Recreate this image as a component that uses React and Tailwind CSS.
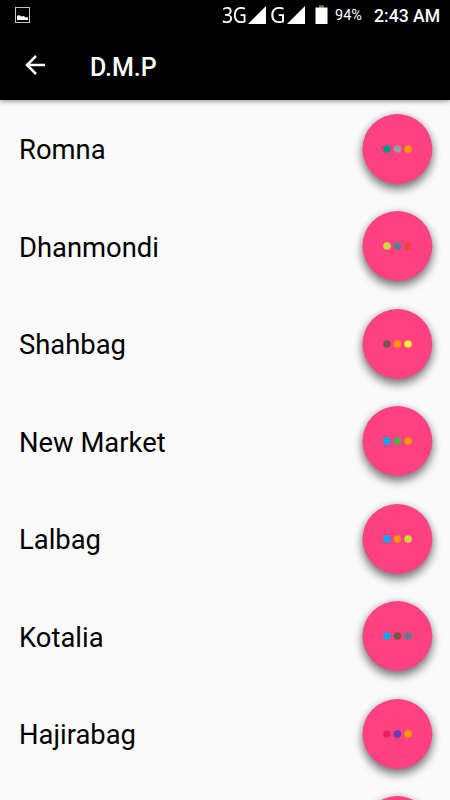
import React from 'react';

const areas = [
    { name: 'Romna', dots: ['#009688', '#9e9e9e', '#ff9800'] },
    { name: 'Dhanmondi', dots: ['#cddc39', '#607d8b', '#f44336'] },
    { name: 'Shahbag', dots: ['#795548', '#ff9800', '#ffeb3b'] },
    { name: 'New Market', dots: ['#03a9f4', '#4caf50', '#ff9800'] },
    { name: 'Lalbag', dots: ['#03a9f4', '#ff9800', '#cddc39'] },
    { name: 'Kotalia', dots: ['#03a9f4', '#795548', '#607d8b'] },
    { name: 'Hajirabag', dots: ['#e91e63', '#673ab7', '#ff9800'] },
    { name: '', dots: ['#03a9f4', '#4caf50', '#ff9800'] },
];

function Signal() {
    return (
        <svg width="18" height="18" viewBox="0 0 18 18" className="block">
            <path d="M0 18L18 0V18Z" fill="#fff" />
        </svg>
    );
}

function StatusBar() {
    return (
        <div className="flex h-[31px] items-start text-white">
            <svg width="15" height="16" viewBox="0 0 15 16" className="mt-[7px] ml-[15px]">
                <rect x="0.5" y="0.5" width="14" height="15" fill="none" stroke="#c4c4c4" />
                <path d="M2 13V9L4 8L6 9.5L9 9L10.5 10.5L12 10L13 11V13Z" fill="#fff" />
            </svg>
            <div className="ml-auto flex items-start">
                <span className="w-[25px] origin-left scale-x-[0.86] text-[22.5px] leading-[30px] tracking-[-0.5px] font-['Noto_Sans']">3G</span>
                <div className="mt-[6px] ml-px"><Signal /></div>
                <span className="ml-[4px] w-[17px] origin-left scale-x-95 text-[22.5px] leading-[30px] font-['Noto_Sans']">G</span>
                <div className="mt-[6px]"><Signal /></div>
                <svg width="13" height="19" viewBox="0 0 13 19" className="mt-[5px] ml-[10px]">
                    <rect x="4" y="0" width="5" height="3" fill="#5c5c5c" />
                    <rect x="0.5" y="2.5" width="12" height="16.5" fill="#fff" />
                </svg>
                <span className="ml-[7px] w-[28px] text-[14.5px] leading-[32px]">94%</span>
                <span className="mr-[10px] ml-[11px] w-[66px] text-[17.6px] leading-[33px] font-medium whitespace-nowrap">2:43 AM</span>
            </div>
        </div>
    );
}

function MoreButton({ dots }) {
    return (
        <button type="button" aria-label="More" className="mr-[18px] h-[70px] w-[70px] shrink-0 rounded-full">
            <svg
                width="70"
                height="70"
                viewBox="0 0 70 70"
                className="block overflow-visible [filter:drop-shadow(0_5px_5px_rgba(0,0,0,0.48))_drop-shadow(0_0_3px_rgba(0,0,0,0.16))]"
            >
                <circle cx="35.4" cy="35" r="34.9" fill="#ff4081" />
                {dots.map((color, i) => (
                    <circle key={i} cx={24.9 + i * 10.6} cy="35" r="3.8" fill={color} />
                ))}
            </svg>
        </button>
    );
}

export default function App() {
    return (
        <div className="flex h-screen w-full flex-col overflow-hidden bg-[#fafafa] font-[Roboto,sans-serif]">
            <header className="z-10 h-[100px] shrink-0 bg-black text-white shadow-[0_1px_5px_rgba(0,0,0,0.45)]">
                <StatusBar />
                <div className="flex h-[69px] items-center">
                    <svg width="20" height="20" viewBox="0 0 20 20" className="-mt-px ml-[25px]">
                        <path d="M20 10H2M11 1L2 10L11 19" fill="none" stroke="#fff" strokeWidth="2.5" />
                    </svg>
                    <h1 className="mt-[4px] ml-[45px] text-[25px] leading-[30px] font-medium">D.M.P</h1>
                </div>
            </header>

            <main className="min-h-0 flex-1 overflow-hidden">
                {areas.map((area, i) => (
                    <div key={i} className="flex h-[97.5px] items-center justify-between">
                        <span className="mt-[3px] ml-[19px] text-[27.4px] leading-[34px] text-black">{area.name}</span>
                        <MoreButton dots={area.dots} />
                    </div>
                ))}
            </main>
        </div>
    );
}
